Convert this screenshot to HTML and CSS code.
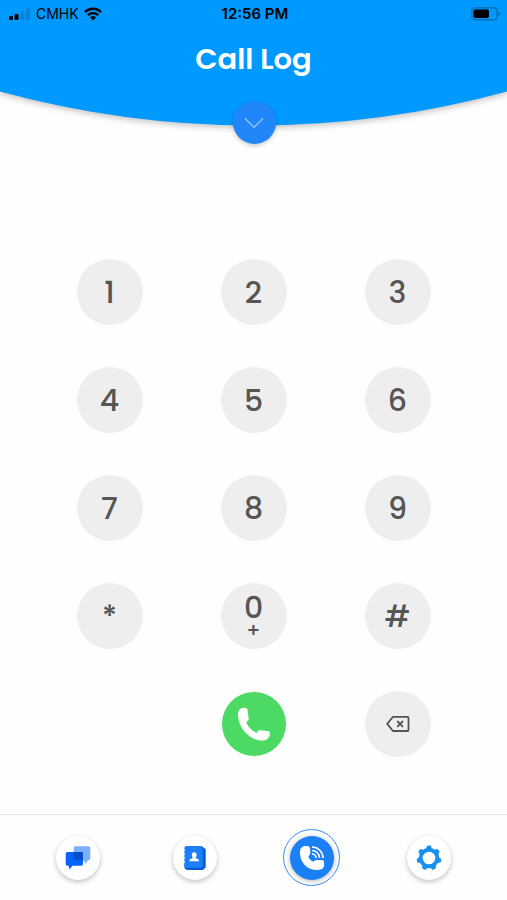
FILE: index.html
```html
<!DOCTYPE html>
<html lang="en">
<head>
<meta charset="utf-8">
<meta name="viewport" content="width=device-width, initial-scale=1">
<title>Call Log</title>
<link rel="stylesheet" href="styles.css">
</head>
<body>
<header class="header">
  <svg class="header-curve" viewBox="0 0 507 126" preserveAspectRatio="none" aria-hidden="true">
    <path d="M0 0H507V91.500A962 962 0 0 1 0 91.500Z" fill="#0099ff"/>
  </svg>
  <div class="status">
    <div class="carrier">
      <svg width="22" height="14" viewBox="0 0 22 14" aria-hidden="true">
        <rect x="0" y="9" width="4" height="4" rx="1" fill="#000"/>
        <rect x="5.500" y="7" width="4" height="6" rx="1" fill="#000"/>
        <rect x="11.500" y="4" width="4" height="9" rx="1" fill="#0883d8"/>
        <rect x="17" y="1" width="4" height="12" rx="1" fill="#0883d8"/>
      </svg>
      <span>CMHK</span>
      <svg width="18" height="14" viewBox="0 0 18 14" aria-hidden="true">
        <g fill="none" stroke="#000" stroke-width="2.400">
          <path d="M.9 5.100A11.600 11.600 0 0 1 17.100 5.100"/>
          <path d="M3.800 8.200A7.500 7.500 0 0 1 14.200 8.200"/>
        </g>
        <path d="M6 10.400A4.400 4.400 0 0 1 12 10.400L9 13.600Z" fill="#000"/>
      </svg>
    </div>
    <div class="time">12:56 PM</div>
    <svg class="battery" width="30" height="14" viewBox="0 0 30 14" aria-hidden="true">
      <rect x=".8" y=".8" width="25.400" height="12" rx="3.500" fill="none" stroke="#0668a6" stroke-width="1.300"/>
      <rect x="2.500" y="2.600" width="15.500" height="8.500" rx="1.800" fill="#000"/>
      <path d="M27.500 4.500Q29.500 5.200 29.500 6.800T27.500 9Z" fill="#0668a6"/>
    </svg>
  </div>
  <h1 class="title">Call Log</h1>
  <button class="expand" type="button" aria-label="Show call log">
    <svg width="20" height="12" viewBox="0 0 20 12" aria-hidden="true"><path d="M.8 1.200L10 10.300L19.200 1.200" fill="none" stroke="#8cc4ff" stroke-width="1.500"/></svg>
  </button>
</header>
<main class="main">
  <div class="keypad">
    <button class="key" type="button">1</button>
    <button class="key" type="button">2</button>
    <button class="key" type="button">3</button>
    <button class="key" type="button">4</button>
    <button class="key" type="button">5</button>
    <button class="key" type="button">6</button>
    <button class="key" type="button">7</button>
    <button class="key" type="button">8</button>
    <button class="key" type="button">9</button>
    <button class="key" type="button">*</button>
    <button class="key zero" type="button"><span>0</span><span class="plus">+</span></button>
    <button class="key" type="button">#</button>
    <button class="key call" type="button" aria-label="Call">
      <svg width="34" height="34" viewBox="0 0 34 34" aria-hidden="true"><path d="M7.300.7C3.800.4.800 3 1 8.200C1.400 15.500 4.800 22.500 10.500 27.500C15.500 32 21.500 34 26.500 33.400C30.500 33 33 30 33 26.500C33 24.800 32.300 24 30.500 23.900L22.500 23.200C21.300 23.100 20.700 23.800 20.300 25.200C19.900 25.900 19.200 25.800 18.300 25.300C14.600 23.400 11.400 20 9.600 16.300C9.200 15.300 9.300 14.700 10.200 14.200C11.500 13.700 11.900 13 11.700 11.800L10.500 2.800C10.200 1.200 9.200.8 7.300.7Z" fill="#fff"/></svg>
    </button>
    <button class="key erase" type="button" aria-label="Delete">
      <svg width="24" height="18" viewBox="0 0 24 18" aria-hidden="true"><g fill="none" stroke="#555"><path d="M7 1.800H21.500Q22.500 1.800 22.500 2.800V15Q22.500 16 21.500 16H7L1.200 8.900Z" stroke-width="1.800" stroke-linejoin="round"/><path d="M11.200 6L17 11.800M17 6L11.200 11.800" stroke-width="1.800"/></g></svg>
    </button>
  </div>
</main>
<nav class="tabs" aria-label="Main">
  <a class="tab" href="#messages" aria-label="Messages"><span class="disc">
    <svg width="26" height="26" viewBox="0 0 26 26" aria-hidden="true">
      <path d="M10.500 1.200H23.500Q25.300 1.200 25.300 3V13.500Q25.300 15.200 23.500 15.200H22.700L21 19L18.500 15.200H10.500Q8.700 15.200 8.700 13.500V3Q8.700 1.200 10.500 1.200Z" fill="#7cb0ff"/>
      <path d="M2.500 7H16.300Q18 7 18 8.800V19Q18 20.800 16.300 20.800H7.500L4.500 24.600L3.700 20.800H2.500Q.7 20.800.7 19V8.800Q.7 7 2.500 7Z" fill="#0763fa"/>
      <path d="M8.700 7H16.300Q18 7 18 8.800V15.200H10.500Q8.700 15.200 8.700 13.500Z" fill="#034fc9"/>
    </svg>
  </span></a>
  <a class="tab" href="#contacts" aria-label="Contacts"><span class="disc">
    <svg width="24" height="26" viewBox="0 0 24 26" aria-hidden="true">
      <path d="M5 1H18.500L22.700 4.300V22.500L19.800 25H4.500Q1.500 24.500 1.300 21.500Z" fill="#075bd6"/>
      <rect x="1.300" y="1" width="18.500" height="21.800" rx="2.500" fill="#1b80f8"/>
      <path d="M1 5H2.500M1 9H2.500M1 13H2.500M1 17H2.500" stroke="#fff" stroke-width="1"/>
      <path d="M2.500 5H4M2.500 9H4M2.500 13H4M2.500 17H4" stroke="#075bd6" stroke-width="1"/>
      <path d="M11.200 7.300C9.300 7.300 8.600 8.700 8.900 10.400C9 11.300 9.400 11.900 9.800 12.400C9.700 13.500 6.500 13.200 6.300 16.200H16.100C15.900 13.200 12.700 13.500 12.600 12.400C13 11.900 13.400 11.300 13.500 10.400C13.800 8.700 13.100 7.300 11.200 7.300Z" fill="#fff"/>
    </svg>
  </span></a>
  <a class="tab active" href="#calls" aria-label="Calls" aria-current="page"><span class="ring"><span class="disc">
    <svg width="26" height="26" viewBox="0 0 26 26" aria-hidden="true">
      <path d="M4 1.500C1.300 2.600.7 5.500 1 9C1.600 17.500 8 24.700 16.500 25C20.500 25.200 24 24.500 24.900 21.500C25.300 20 25.300 18 24.800 16.500C24.500 15.400 23.500 15.100 22 15C19.900 14.800 18 14.800 16.500 15.300C15.700 15.600 15.400 16.500 14.800 16.600C12.500 16.500 9.700 13.700 9.500 11.500C9.500 10.800 10.700 10.400 11 9.600C11.500 8 11.300 5.500 11 3.500C10.800 1.900 10.300 1.500 9 1.300C7.300 1 5.500 1 4 1.500Z" fill="#fff"/>
      <g fill="none" stroke="#fff" stroke-width="1.600"><path d="M13 2A11 11 0 0 1 24 13"/><path d="M13 5.500A7.500 7.500 0 0 1 20.500 13"/><path d="M13 9A4 4 0 0 1 17 13"/></g>
    </svg>
  </span></span></a>
  <a class="tab" href="#settings" aria-label="Settings"><span class="disc">
    <svg width="26" height="26" viewBox="-13 -13 26 26" aria-hidden="true">
      <circle r="8.300" fill="none" stroke="#1790ef" stroke-width="4"/>
      <g fill="#1790ef">
        <rect id="tooth" x="-2.500" y="-12.400" width="5" height="5" rx="1.800"/>
        <use href="#tooth" transform="rotate(51.430)"/><use href="#tooth" transform="rotate(102.860)"/><use href="#tooth" transform="rotate(154.290)"/><use href="#tooth" transform="rotate(205.710)"/><use href="#tooth" transform="rotate(257.140)"/><use href="#tooth" transform="rotate(308.570)"/>
      </g>
    </svg>
  </span></a>
</nav>
</body>
</html>
```
FILE: styles.css
```css
* {
  box-sizing: border-box;
}

body {
  margin: 0;
  min-height: 100vh;
  display: flex;
  flex-direction: column;
  background: #fefefe;
  color: #555;
  font-family: Poppins, Inter, "Liberation Sans", sans-serif;
}

svg {
  display: block;
}

button {
  border: 0;
  padding: 0;
  font: inherit;
  color: inherit;
  cursor: pointer;
}

.header {
  position: relative;
  height: 126px;
}

.header-curve {
  position: absolute;
  inset: 0;
  width: 100%;
  height: 100%;
  overflow: visible;
  filter: drop-shadow(0 2px 3px rgba(0, 0, 0, 0.25));
}

.status {
  position: relative;
  display: grid;
  grid-template-columns: 1fr auto 1fr;
  align-items: center;
  height: 27px;
  padding: 0 6px 0 9px;
  color: #000;
  font-family: Inter, "Liberation Sans", sans-serif;
  font-size: 14px;
}

.carrier {
  display: flex;
  align-items: center;
  gap: 5px;
}

.time {
  font-size: 15px;
  font-weight: 600;
}

.battery {
  justify-self: end;
}

.title {
  position: relative;
  margin: 12px 0 0;
  text-align: center;
  color: #fff;
  font-size: 29px;
  line-height: 40px;
  font-weight: 600;
  font-feature-settings: "cv11";
}

.expand {
  position: absolute;
  left: 50%;
  bottom: -18px;
  display: grid;
  place-items: center;
  width: 43px;
  height: 43px;
  margin-left: -21px;
  border-radius: 50%;
  background: #2086fa;
  box-shadow: 0 2px 4px rgba(0, 0, 0, 0.2);
}

.main {
  flex: 1;
  padding: 133px 0 57px;
}

.keypad {
  display: grid;
  grid-template-columns: repeat(3, 66px);
  justify-content: center;
  gap: 42px 78px;
}

.key {
  display: flex;
  flex-direction: column;
  align-items: center;
  justify-content: center;
  width: 66px;
  height: 66px;
  padding-top: 2px;
  border-radius: 50%;
  background: #eee;
  font-size: 30px;
  line-height: 30px;
  font-weight: 500;
}

.zero {
  line-height: 26px;
}

.plus {
  font-size: 20px;
  line-height: 18px;
}

.call,
.erase {
  padding-top: 0;
}

.call {
  grid-column: 2;
  background: #4cd964;
  border: 1px solid #fefefe;
}

.tabs {
  display: flex;
  height: 86px;
  padding: 0 20px;
  border-top: 1px solid #e6e6e6;
}

.tab {
  flex: 1;
  display: grid;
  place-items: center;
}

.disc {
  display: grid;
  place-items: center;
  width: 44px;
  height: 44px;
  border-radius: 50%;
  background: #fff;
  box-shadow: 0 2px 5px rgba(0, 0, 0, 0.24);
}

.ring {
  display: grid;
  place-items: center;
  width: 57px;
  height: 57px;
  border: 1px solid #3c8df5;
  border-radius: 50%;
}

.active .disc {
  background: #1b80f6;
  box-shadow: 0 1px 5px rgba(0, 0, 0, 0.3);
}
```
